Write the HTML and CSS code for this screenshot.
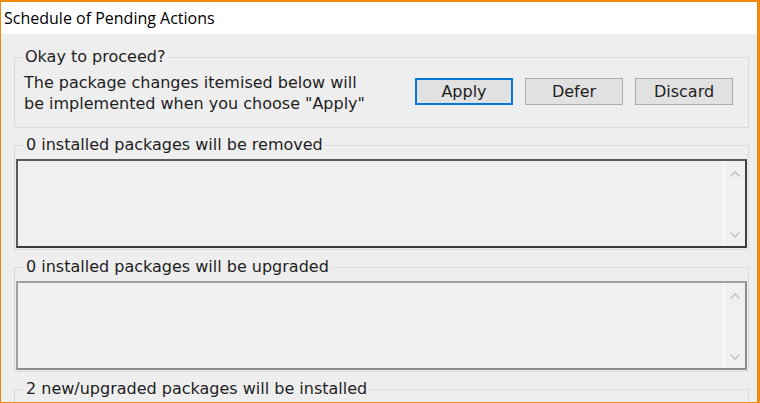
FILE: index.html
```html
<!DOCTYPE html>
<html>
<head>
<meta charset="utf-8">
<link rel="stylesheet" href="styles.css">
</head>
<body>
<div class="window">
  <div class="titlebar">Schedule of Pending Actions</div>
  <div class="client">
    <fieldset class="group group-top">
      <legend>Okay to proceed?</legend>
      <div class="proceed">
        <p class="msg">The package changes itemised below will<br>be implemented when you choose "Apply"</p>
        <div class="buttons">
          <button class="btn btn-default">Apply</button>
          <button class="btn">Defer</button>
          <button class="btn">Discard</button>
        </div>
      </div>
    </fieldset>

    <fieldset class="group group-list">
      <legend>0 installed packages will be removed</legend>
      <div class="listbox dark">
        <div class="list-area"></div>
        <div class="scrollbar">
          <svg class="chev" width="12" height="8" viewBox="0 0 12 8"><path d="M1.5 6.5 L6 2 L10.5 6.5" fill="none" stroke="#c4c4c4" stroke-width="1.6"/></svg>
          <svg class="chev" width="12" height="8" viewBox="0 0 12 8"><path d="M1.5 1.5 L6 6 L10.5 1.5" fill="none" stroke="#c4c4c4" stroke-width="1.6"/></svg>
        </div>
      </div>
    </fieldset>

    <fieldset class="group group-list">
      <legend>0 installed packages will be upgraded</legend>
      <div class="listbox light">
        <div class="list-area"></div>
        <div class="scrollbar">
          <svg class="chev" width="12" height="8" viewBox="0 0 12 8"><path d="M1.5 6.5 L6 2 L10.5 6.5" fill="none" stroke="#c4c4c4" stroke-width="1.6"/></svg>
          <svg class="chev" width="12" height="8" viewBox="0 0 12 8"><path d="M1.5 1.5 L6 6 L10.5 1.5" fill="none" stroke="#c4c4c4" stroke-width="1.6"/></svg>
        </div>
      </div>
    </fieldset>

    <fieldset class="group group-list">
      <legend>2 new/upgraded packages will be installed</legend>
      <div class="listbox light">
        <div class="list-area"></div>
      </div>
    </fieldset>
  </div>
</div>
</body>
</html>
```

FILE: styles.css
```css
html, body {
  margin: 0;
  padding: 0;
  width: 760px;
  height: 403px;
  overflow: hidden;
  background: #f0f0f0;
}

.window {
  box-sizing: border-box;
  width: 760px;
  height: 403px;
  border-top: 2px solid #f08a0c;
  border-left: 1px solid #f08a0c;
  border-right: 3px solid #f08a0c;
  border-bottom: 1px solid #f08a0c;
  overflow: hidden;
  display: flex;
  flex-direction: column;
}

.titlebar {
  background: #ffffff;
  height: 32px;
  flex: none;
  font-family: "Open Sans", "Noto Sans", sans-serif;
  font-size: 16px;
  line-height: 32px;
  color: #000;
  padding-left: 3px;
}

.client {
  flex: 1;
  background: #eeeeee;
  padding: 14px 0 0 13px;
  font-family: "DejaVu Sans", Verdana, sans-serif;
  font-size: 16px;
  color: #1e1e1e;
  display: flex;
  flex-direction: column;
}

.group {
  margin: 0;
  width: 735px;
  box-sizing: border-box;
  border: 1px solid #dcdcdc;
  padding: 0;
  flex: none;
}

.group legend {
  padding: 0 2px;
  margin-left: 8px;
  line-height: 18px;
}

.group-top {
  height: 80px;
  margin-bottom: 8px;
}

.proceed {
  display: flex;
  align-items: flex-start;
  justify-content: space-between;
  padding: 0 15px 0 9px;
  margin-top: 6px;
}

.msg {
  margin: 0;
  line-height: 21px;
}

.buttons {
  display: flex;
  gap: 12px;
  margin-top: 6px;
}

.btn {
  width: 98px;
  height: 27px;
  box-sizing: border-box;
  background: #e1e1e1;
  border: 1px solid #adadad;
  font-family: "DejaVu Sans", Verdana, sans-serif;
  font-size: 16px;
  color: #1e1e1e;
  padding: 0;
  margin: 0;
}

.btn-default {
  border: 2px solid #0078d7;
}

.group-list {
  height: 114px;
  padding: 0 1px 1px 1px;
  margin-bottom: 8px;
}

.listbox {
  box-sizing: border-box;
  height: 89px;
  margin-top: 5px;
  display: flex;
  background: #f0f0f0;
}

.listbox.dark {
  border-top: 2px solid #5a5a5a;
  border-left: 2px solid #5a5a5a;
  border-right: 2px solid #3c3c3c;
  border-bottom: 2px solid #3c3c3c;
}

.listbox.light {
  border-top: 2px solid #a0a0a0;
  border-left: 2px solid #a0a0a0;
  border-right: 2px solid #8c8c8c;
  border-bottom: 2px solid #8c8c8c;
}

.list-area {
  flex: 1;
}

.scrollbar {
  width: 21px;
  border-left: 1px solid #ffffff;
  display: flex;
  flex-direction: column;
  justify-content: space-between;
  align-items: center;
  padding: 9px 0 7px;
}

.chev {
  display: block;
}
```
